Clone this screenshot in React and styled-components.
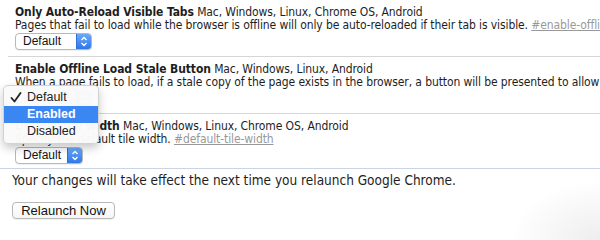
import React from "react";
import styled, { createGlobalStyle } from "styled-components";

const GlobalStyle = createGlobalStyle`
  html, body {
    margin: 0;
    padding: 0;
    background: #fff;
    overflow: hidden;
  }
  body {
    width: 600px;
    height: 240px;
    background: radial-gradient(ellipse 90px 60px at 100% 100%, rgba(0, 0, 0, 0.07), rgba(0, 0, 0, 0));
  }
`;

const Page = styled.div`
  width: 600px;
  height: 240px;
  overflow: hidden;
  font-family: "DejaVu Sans Condensed", "DejaVu Sans", sans-serif;
  color: #1e1e1e;
`;

const FlagList = styled.div`
  margin-left: 8px;
`;

const Flag = styled.div`
  padding: 6px 0 ${(p) => (p.last ? "4px" : "6px")} 7px;
  border-bottom: ${(p) => (p.last ? "none" : "1px solid #d6d6d6")};
  font-size: 12px;
  line-height: 13px;
  letter-spacing: -0.1px;
  white-space: nowrap;
`;

const FlagName = styled.span`
  font-weight: bold;
`;

const FlagText = styled.div``;

const FlagLink = styled.a`
  color: #999;
  text-decoration: underline;
`;

const SelectWrap = styled.div`
  position: relative;
  margin-top: 1px;
  height: 17px;
  letter-spacing: 0;
`;

const SelectBox = styled.div`
  box-sizing: border-box;
  width: ${(p) => p.width}px;
  height: 17px;
  display: flex;
  align-items: stretch;
  border: 1px solid #b8b8b8;
  border-radius: 4px;
  background: #fff;
  box-shadow: 0 1px 0 rgba(0, 0, 0, 0.06);
  font-family: "Liberation Sans", Arial, sans-serif;
  font-size: 12px;
  color: #111;
  overflow: hidden;
`;

const SelectLabel = styled.span`
  flex: 1;
  padding-left: 7px;
  line-height: 15px;
`;

const SelectArrow = styled.span`
  width: 14px;
  display: flex;
  align-items: center;
  justify-content: center;
  background: linear-gradient(#6aaaf9, #2f76ea);
  border-left: 1px solid #2f6fd6;
`;

const Menu = styled.div`
  position: absolute;
  left: -12px;
  top: -5px;
  width: 94px;
  padding: 3px 0;
  background: rgba(250, 250, 250, 0.98);
  border: 1px solid rgba(0, 0, 0, 0.16);
  border-radius: 5px;
  box-shadow: 0 4px 10px rgba(0, 0, 0, 0.22);
  font-family: "Liberation Sans", Arial, sans-serif;
  font-size: 12.5px;
  z-index: 2;
`;

const MenuItem = styled.div`
  position: relative;
  height: 17px;
  line-height: 17px;
  padding-left: 23px;
  background: ${(p) => (p.active ? "#3a86f3" : "transparent")};
  color: ${(p) => (p.active ? "#fff" : "#222")};
  font-weight: ${(p) => (p.active ? "bold" : "normal")};
`;

const Check = styled.svg`
  position: absolute;
  left: 6px;
  top: 3px;
`;

const Footer = styled.div`
  border-top: 1px solid #c9d5e6;
  padding: 4px 0 0 12px;
`;

const Notice = styled.div`
  font-size: 13.5px;
  line-height: 15px;
  white-space: nowrap;
`;

const RelaunchButton = styled.button`
  margin-top: 14px;
  box-sizing: border-box;
  width: 103px;
  height: 17px;
  padding: 0;
  border: 1px solid #b8b8b8;
  border-radius: 4px;
  background: linear-gradient(#fff, #f6f6f6);
  box-shadow: 0 1px 0 rgba(0, 0, 0, 0.06);
  font-family: "Liberation Sans", Arial, sans-serif;
  font-size: 13px;
  line-height: 15px;
  color: #111;
`;

const Arrows = () => (
  <svg width="8" height="11" viewBox="0 0 8 11">
    <path d="M1.5 4 L4 1.5 L6.5 4" fill="none" stroke="#fff" strokeWidth="1.4" />
    <path d="M1.5 7 L4 9.5 L6.5 7" fill="none" stroke="#fff" strokeWidth="1.4" />
  </svg>
);

const Select = ({ width, open }) => (
  <SelectWrap>
    <SelectBox width={width}>
      <SelectLabel>Default</SelectLabel>
      <SelectArrow>
        <Arrows />
      </SelectArrow>
    </SelectBox>
    {open && (
      <Menu>
        <MenuItem>
          <Check width="12" height="11" viewBox="0 0 12 11">
            <path d="M1.5 6 L4.5 9.5 L10.5 1" fill="none" stroke="#222" strokeWidth="1.8" strokeLinecap="round" strokeLinejoin="round" />
          </Check>
          Default
        </MenuItem>
        <MenuItem active>Enabled</MenuItem>
        <MenuItem>Disabled</MenuItem>
      </Menu>
    )}
  </SelectWrap>
);

const flags = [
  {
    name: "Only Auto-Reload Visible Tabs",
    platforms: "Mac, Windows, Linux, Chrome OS, Android",
    text: "Pages that fail to load while the browser is offline will only be auto-reloaded if their tab is visible.",
    link: "#enable-offline-auto-reload-visible-only",
    width: 77,
  },
  {
    name: "Enable Offline Load Stale Button",
    platforms: "Mac, Windows, Linux, Android",
    text: "When a page fails to load, if a stale copy of the page exists in the browser, a button will be presented to allow the user to load that stale copy.",
    link: "#enable-offline-load-stale-cache",
    width: 77,
    open: true,
  },
  {
    name: "Default tile width",
    platforms: "Mac, Windows, Linux, Chrome OS, Android",
    text: "Specify the default tile width.",
    link: "#default-tile-width",
    width: 68,
  },
];

const App = () => (
  <Page>
    <GlobalStyle />
    <FlagList>
      {flags.map((f, i) => (
        <Flag key={f.name} last={i === flags.length - 1}>
          <FlagText>
            <FlagName>{f.name}</FlagName> {f.platforms}
          </FlagText>
          <FlagText>
            {f.text} <FlagLink>{f.link}</FlagLink>
          </FlagText>
          <Select width={f.width} open={f.open} />
        </Flag>
      ))}
    </FlagList>
    <Footer>
      <Notice>Your changes will take effect the next time you relaunch Google Chrome.</Notice>
      <RelaunchButton>Relaunch Now</RelaunchButton>
    </Footer>
  </Page>
);

export default App;
